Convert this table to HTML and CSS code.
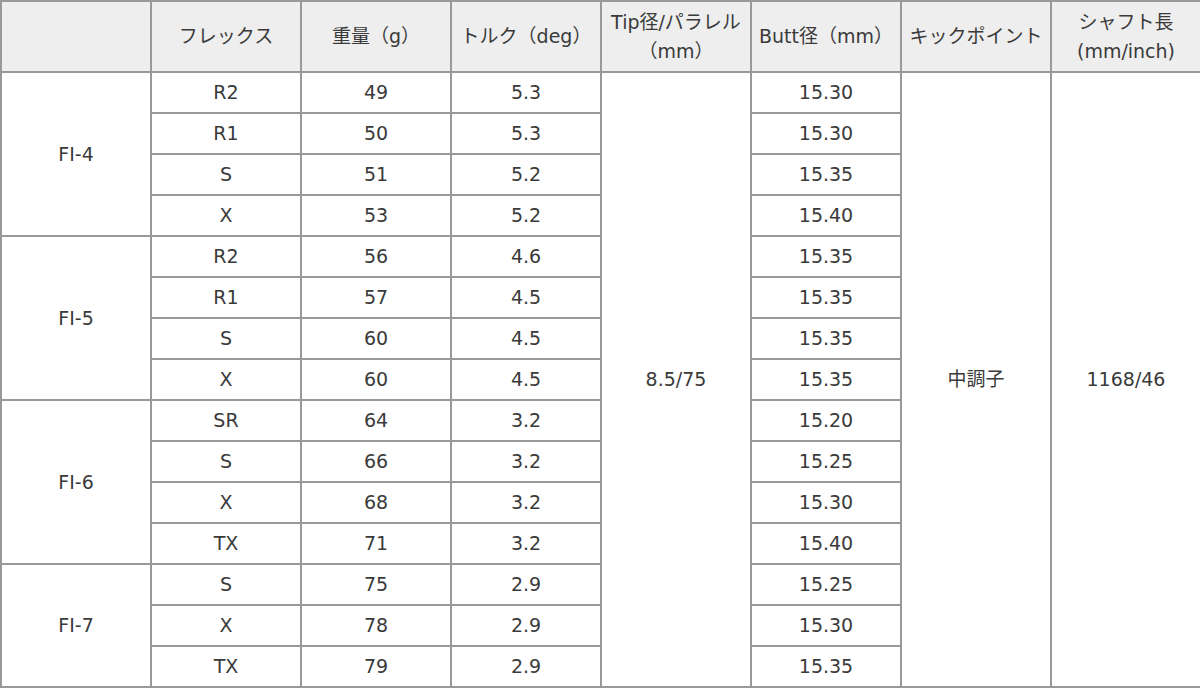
FILE: index.html
```html
<!DOCTYPE html>
<html lang="ja">
<head>
<meta charset="utf-8">
<title>Spec</title>
<link rel="stylesheet" href="styles.css">
</head>
<body>
<table class="spec">
  <colgroup>
    <col class="c"><col class="c"><col class="c"><col class="c"><col class="c"><col class="c"><col class="c"><col class="c">
  </colgroup>
  <thead>
    <tr class="head">
      <th></th>
      <th>フレックス</th>
      <th>重量（g）</th>
      <th>トルク（deg）</th>
      <th>Tip径/パラレル<br>（mm）</th>
      <th>Butt径（mm）</th>
      <th>キックポイント</th>
      <th>シャフト長<br>(mm/inch)</th>
    </tr>
  </thead>
  <tbody>
    <tr><td rowspan="4">FI-4</td><td>R2</td><td>49</td><td>5.3</td><td rowspan="15">8.5/75</td><td>15.30</td><td rowspan="15">中調子</td><td rowspan="15">1168/46</td></tr>
    <tr><td>R1</td><td>50</td><td>5.3</td><td>15.30</td></tr>
    <tr><td>S</td><td>51</td><td>5.2</td><td>15.35</td></tr>
    <tr><td>X</td><td>53</td><td>5.2</td><td>15.40</td></tr>
    <tr><td rowspan="4">FI-5</td><td>R2</td><td>56</td><td>4.6</td><td>15.35</td></tr>
    <tr><td>R1</td><td>57</td><td>4.5</td><td>15.35</td></tr>
    <tr><td>S</td><td>60</td><td>4.5</td><td>15.35</td></tr>
    <tr><td>X</td><td>60</td><td>4.5</td><td>15.35</td></tr>
    <tr><td rowspan="4">FI-6</td><td>SR</td><td>64</td><td>3.2</td><td>15.20</td></tr>
    <tr><td>S</td><td>66</td><td>3.2</td><td>15.25</td></tr>
    <tr><td>X</td><td>68</td><td>3.2</td><td>15.30</td></tr>
    <tr><td>TX</td><td>71</td><td>3.2</td><td>15.40</td></tr>
    <tr><td rowspan="3">FI-7</td><td>S</td><td>75</td><td>2.9</td><td>15.25</td></tr>
    <tr><td>X</td><td>78</td><td>2.9</td><td>15.30</td></tr>
    <tr><td>TX</td><td>79</td><td>2.9</td><td>15.35</td></tr>
  </tbody>
</table>
</body>
</html>
```
FILE: styles.css
```css
html, body {
  margin: 0;
  padding: 0;
  background: #ffffff;
}
body {
  font-family: "DejaVu Sans", "Noto Sans CJK JP", sans-serif;
  font-size: 19px;
  color: #3a3a3a;
}
.spec {
  width: 1200px;
  border-collapse: collapse;
  table-layout: fixed;
  border: 2px solid #999999;
}
.spec .c {
  width: 150px;
}
.spec th,
.spec td {
  border: 2px solid #999999;
  text-align: center;
  vertical-align: middle;
  padding: 0 1px;
  font-weight: normal;
  line-height: 29px;
}
.spec th {
  background: #eeeeee;
  height: 69px;
}
.spec td {
  height: 39px;
}
```
